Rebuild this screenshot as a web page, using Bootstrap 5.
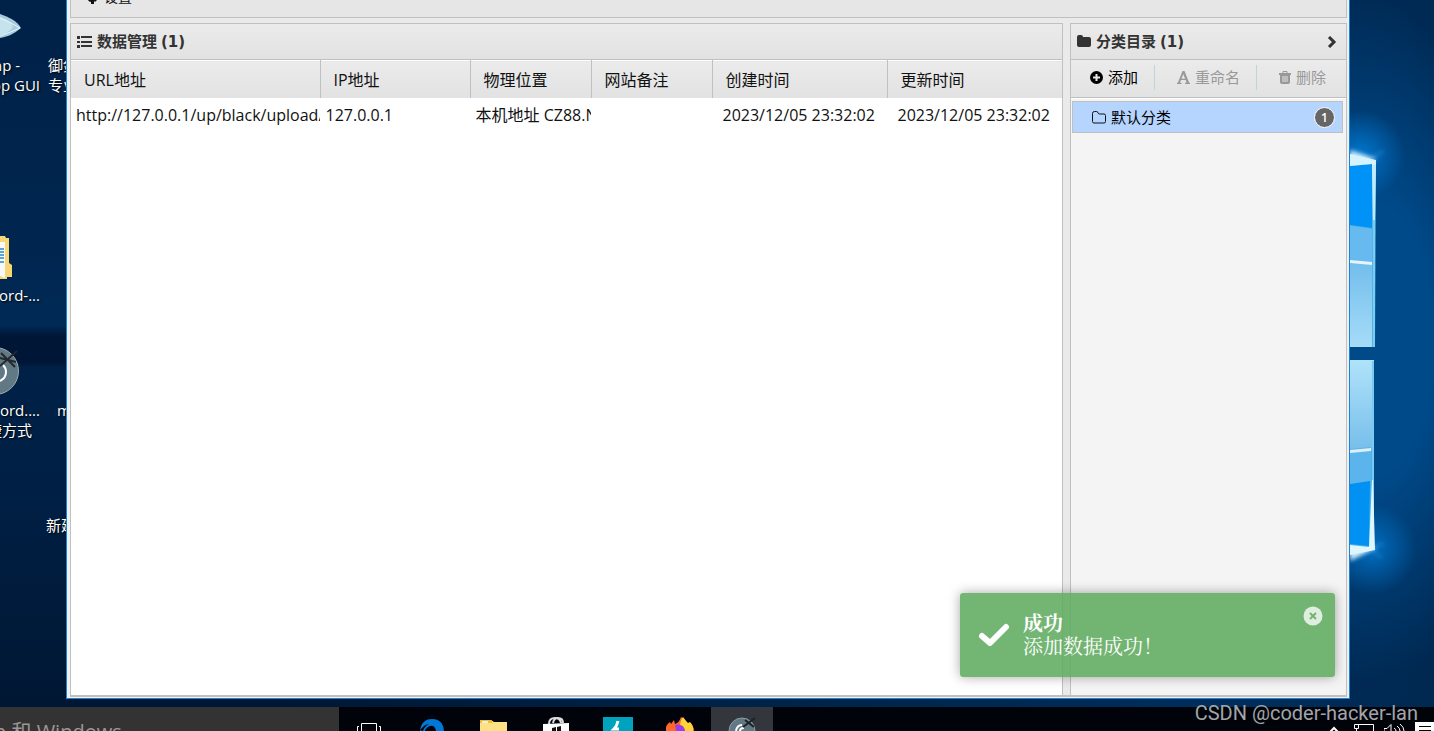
<!DOCTYPE html>
<html lang="zh-CN">
<head>
<meta charset="utf-8">
<meta name="viewport" content="width=device-width, initial-scale=1">
<title>数据管理</title>
<link rel="stylesheet" href="https://cdn.jsdelivr.net/npm/bootstrap@5.3.0/dist/css/bootstrap.min.css">
<style>
  body { font-family: "Open Sans", "Noto Sans CJK SC", sans-serif; font-size: 16px; line-height: 20px; color: #111; background: #000; }
  svg { display: block; flex: none; }
  button { font: inherit; }

  /* desktop */
  .desktop {
    min-height: 0;
    padding: 0 84px 8px 66px;
    background:
      radial-gradient(circle at 1360px 155px, rgba(0,140,240,.7), transparent 45px),
      radial-gradient(circle at 1372px 549px, rgba(0,140,240,.6), transparent 45px),
      radial-gradient(ellipse 160px 340px at 1370px 340px, #004a8a 40%, transparent),
      linear-gradient(90deg, transparent 20%, rgba(0,50,98,.85) 85%, rgba(0,42,84,.9)),
      linear-gradient(#002148, #00264f 250px, #002a56 325px, #001636 336px, #001636 362px, #002147 368px, #001f44 500px, #001733);
  }
  .logo-glow { right: 0; top: 0; }
  .shortcut { color: #fff; font-size: 15px; line-height: 20px; white-space: nowrap; text-shadow: 1px 1px 2px #000; }
  .shortcut.first-col { left: -40px; width: 80px; text-align: right; }

  /* application window */
  .app-window { z-index: 1; min-width: 0; padding: 0 2px 1px 3px; background: #f0f0f0; border: 1px solid #1883d7; border-top: 0; }
  .app-body { min-height: 0; background: #eaeaea; border-bottom: 2px solid #c0c0c0; }
  .menu-strip { height: 18px; padding: 0 16px 10px; font-size: 14px; border: 1px solid #c0c0c0; border-top: 0; background: #e6e6e6; gap: 6px; }
  .panes { min-height: 0; padding-top: 5px; }
  .pane { min-width: 0; border: 1px solid #c0c0c0; border-bottom: 0; }
  .pane-title { height: 36px; padding: 0 8px 0 6px; gap: 5px; font-size: 15px; font-weight: 700; color: #333; background: linear-gradient(#ebebeb, #e2e2e2); border-bottom: 1px solid #c0c0c0; margin: 0; }
  .count { font-family: "DejaVu Sans", sans-serif; font-size: 15px; line-height: 18px; }
  .splitter { flex: none; width: 7px; }
  .sidebar { width: 277px; background: #f4f4f4; }

  .records { table-layout: fixed; width: 100%; border-top: 1px solid #fff; }
  .records th, .records td { overflow: hidden; white-space: nowrap; height: 35px; padding: 0 0 0 5px; }
  .records th { height: 37px; padding: 2px 0 0 13px; font-weight: 400; border-right: 1px solid #c0c0c0; background: linear-gradient(#ebebeb, #e2e2e2); }
  .records th:last-child { border-right: 0; }
  .records td { border-right: 1px solid #fff; }
  .records td.stamp { padding-left: 10px; }
  .w-url { width: 249px; } .w-ip { width: 150px; } .w-short { width: 121px; } .w-time { width: 175px; }

  .tools { height: 38px; padding: 0 0 3px; border-bottom: 1px solid #c0c0c0; background: linear-gradient(#ebebeb, #e2e2e2); font-size: 15px; }
  .tools button { border: 0; background: none; padding: 0 16px 0 19px; gap: 5px; color: #000; }
  .tools button:disabled { color: #999; padding-left: 22px; }
  .tools .rule { width: 1px; height: 25px; background: #bfd6d9; }
  .tree { padding: 2px 3px 0 1px; border-top: 1px solid #fff; }
  .tree a { height: 32px; padding: 0 7px 0 19px; gap: 5px; font-size: 15px; line-height: 18px; color: #000; text-decoration: none; background: #b5d5ff; border: 1px solid #c0c0c0; }
  .pill { width: 21px; height: 21px; font-size: 12px; font-weight: 600; line-height: 19px; color: #fff; background: #666; border: 1px solid #fff; border-radius: 50%; text-align: center; }

  /* notification */
  .notice { z-index: 2; right: 99px; bottom: 30px; width: 375px; height: 84px; padding: 0 12px 2px 19px; gap: 13px; font-size: 20px; line-height: 23px; color: #fff; background: rgba(96,171,96,.88); border-radius: 3px; box-shadow: 0 0 12px rgba(0,0,0,.35); font-family: "Noto Serif CJK SC", "Noto Sans CJK SC", serif; }
  .notice button { border: 0; background: none; padding: 13px 0 0; }

  /* taskbar */
  .taskbar { height: 24px; background: #00040a; }
  .search-box { width: 339px; height: 100%; padding: 13px 0 0; color: #999; background: #333; font-size: 20px; line-height: 24px; text-indent: -6px; white-space: nowrap; }
  .task { width: 62px; height: 100%; border: 0; padding: 0; background: none; }
  .task.running { background: #33373d; }
  .tray { gap: 10px; }
  .watermark { z-index: 3; right: 16px; bottom: 6px; font: 20px/24px Roboto, sans-serif; color: #a3a5a8; }
</style>
</head>
<body class="vh-100 d-flex flex-column overflow-hidden position-relative">
<main class="desktop flex-fill d-flex position-relative overflow-hidden">
  <svg class="logo-glow position-absolute" width="84" height="707" viewBox="0 0 84 707" aria-hidden="true">
    <defs>
      <linearGradient id="pane1" x2="0" y2="1"><stop stop-color="#71bdec"/><stop offset="1" stop-color="#a6dcf8"/></linearGradient>
      <linearGradient id="pane2" x2="0" y2="1"><stop stop-color="#b0e2fa"/><stop offset="1" stop-color="#74bdea"/></linearGradient>
      <filter id="soft" x="-50%" y="-10%" width="200%" height="120%"><feGaussianBlur stdDeviation="2"/></filter>
    </defs>
    <g filter="url(#soft)"><path d="M0 150l27 9-27 8zM0 538l26 10-26 13z" fill="#cbeeff"/><path d="M20 158L34 151M20 549L34 543M22 550L32 558" stroke="#3aa9f5"/></g>
    <path d="M0 156l26 5-1 186H0z" fill="#52b5ea"/>
    <path d="M0 166l22-2v64l-22-3z" fill="#0092f6"/>
    <path d="M0 226l22 3v34l-22-3z" fill="#67baf0"/>
    <path d="M0 261l22 3v83H0z" fill="url(#pane1)"/>
    <path d="M0 260l22 2v3l-22-2z" fill="#e6f4fb"/>
    <path d="M0 154l26 6-1 60h-2l-1-56-22 2z" fill="#d6f4ff"/>
    <path d="M24 165v182" stroke="#a8e3f7" stroke-width="1"/>
    <path d="M0 360h24v190l-24 2z" fill="#4db2e8"/>
    <path d="M0 361h22v89l-22 3z" fill="url(#pane2)"/>
    <path d="M0 449l21-2v35l-21 3z" fill="#5bb5ec"/>
    <path d="M0 450l21-2v3l-21 2z" fill="#e0eff6"/>
    <path d="M0 484l20-3-1 65-19-2z" fill="#0091f2"/>
    <path d="M23 361v187" stroke="#a8e3f7" stroke-width="1"/>
    <path d="M22 480h1l2 70-25 5v-10l19 2z" fill="#dff6ff"/>
    <path d="M0 360.500h24" stroke="#aee4fa" stroke-width="1"/>
  </svg>

  <svg class="position-absolute start-0" style="top:14px" width="22" height="26" viewBox="0 0 22 26" aria-hidden="true"><path d="M0 0c9 3 17 7 21 14-7 6-14 9-21 10z" fill="#a8ccdc"/><path d="M0 3c8 3 12 6 13 10-4 5-8 7-13 8z" fill="#c5e3ef"/><path d="M0 4l7 3M0 22l8-3M7 7l13 7M8 19l12-5" stroke="#e4f6fb" fill="none"/></svg>
  <svg class="position-absolute start-0" style="top:235px" width="13" height="46" viewBox="0 0 13 46" aria-hidden="true"><path d="M0 1h5l1 2h3v25l3 2v12H7v2H0z" fill="#f7d675"/><path d="M0 7h5v36l-5-2z" fill="#f6f8fa"/><path d="M0 14h4M0 17h4M0 20h4M0 23h4M0 27h4" stroke="#5ba4d4" stroke-width="2"/></svg>
  <svg class="position-absolute start-0" style="top:346px" width="20" height="50" viewBox="0 0 20 50" aria-hidden="true"><circle cx="-5" cy="25" r="23.500" fill="#617985" stroke="#9caab0"/><path d="M0 35q6-3 6-9 0-4-3-7" fill="none" stroke="#fff" stroke-width="2"/><path d="M0 20L17 5M1 7l14 14M0 12l16 4" stroke="#22282c" stroke-width="2"/></svg>

  <div class="shortcut first-col position-absolute" style="top:55px"><span class="pe-3">np -&nbsp;</span><br>pp GUI</div>
  <div class="shortcut position-absolute" style="left:48px;top:55px">御剑<br>专业</div>
  <div class="shortcut first-col position-absolute" style="top:285px">word-...</div>
  <div class="shortcut first-col position-absolute" style="top:400px">word....<br><span class="pe-2">捷方式</span></div>
  <div class="shortcut position-absolute" style="left:57px;top:400px">my</div>
  <div class="shortcut position-absolute" style="left:46px;top:515px">新建</div>

  <section class="app-window flex-fill d-flex flex-column position-relative">
    <div class="app-body flex-fill d-flex flex-column">
      <div class="menu-strip d-flex align-items-end overflow-hidden">
        <svg width="11" height="18" viewBox="0 0 11 18" aria-hidden="true"><circle cx="5" cy="9" r="4" fill="#111"/><path d="M4 11h3v4H4zM0 10l3 3 1-3zM11 10l-3 3-1-3z" fill="#111"/></svg>
        <span>设置</span>
      </div>
      <div class="panes flex-fill d-flex">
        <section class="pane flex-fill bg-white">
          <h1 class="pane-title d-flex align-items-center">
            <svg width="15" height="12" viewBox="0 0 15 12" fill="#333" aria-hidden="true"><path d="M0 0h3v3H0zM0 5h3v2H0zM0 9h3v3H0zM4 0h11v2H4zM4 5h11v2H4zM4 9h11v2H4z"/></svg>
            <span>数据管理 <span class="count">(1)</span></span>
          </h1>
          <table class="records">
            <colgroup><col class="w-url"><col class="w-ip"><col class="w-short"><col class="w-short"><col class="w-time"><col></colgroup>
            <thead><tr><th scope="col">URL地址</th><th scope="col">IP地址</th><th scope="col">物理位置</th><th scope="col">网站备注</th><th scope="col">创建时间</th><th scope="col">更新时间</th></tr></thead>
            <tbody><tr><td>http://127.0.0.1/up/black/upload/m</td><td>127.0.0.1</td><td>本机地址 CZ88.NET</td><td></td><td class="stamp">2023/12/05 23:32:02</td><td class="stamp">2023/12/05 23:32:02</td></tr></tbody>
          </table>
        </section>
        <div class="splitter"></div>
        <aside class="pane sidebar flex-shrink-0">
          <h2 class="pane-title d-flex align-items-center">
            <svg width="14" height="13" viewBox="0 0 14 13" fill="#333" aria-hidden="true"><path d="M0 2q0-2 2-2h2q2 0 2 2h6q2 0 2 2v6q0 2-2 2H2q-2 0-2-2z"/></svg>
            <span class="me-auto">分类目录 <span class="count">(1)</span></span>
            <svg width="11" height="12" viewBox="0 0 11 12" fill="none" stroke="#333" stroke-width="3" aria-hidden="true"><path d="M2 1l5 5-5 5"/></svg>
          </h2>
          <div class="tools d-flex align-items-center">
            <button type="button" class="d-flex align-items-center"><svg width="13" height="13" viewBox="0 0 13 13" aria-hidden="true"><circle cx="6.500" cy="6.500" r="6.500"/><path d="M6.500 3v7M3 6.500h7" stroke="#e8e8e8" stroke-width="2"/></svg>添加</button>
            <span class="rule"></span>
            <button type="button" class="d-flex align-items-center" disabled><svg width="13" height="13" viewBox="0 0 13 13" fill="#999" fill-rule="evenodd" aria-hidden="true"><path d="M5.500 0h2L12 11.500l1 .5v1H8v-1l1.500-.5L8.700 9H4l-1 2.500 1.500.5v1H0v-1l1-.5zM6.200 3L4.600 7.700h3.500z"/></svg>重命名</button>
            <span class="rule"></span>
            <button type="button" class="d-flex align-items-center pe-0" disabled><svg width="12" height="13" viewBox="0 0 12 13" aria-hidden="true"><path d="M0 2h12v2H0zM1 4h10v7q0 2-2 2H3q-2 0-2-2z" fill="#999"/><path d="M4 2V.5h4V2" fill="none" stroke="#999"/><path d="M4 5v6M6 5v6M8 5v6" stroke="#e3e3e3"/></svg>删除</button>
          </div>
          <nav class="tree">
            <a href="#" class="d-flex align-items-center">
              <svg width="14" height="13" viewBox="0 0 14 13" fill="none" stroke="#111" aria-hidden="true"><path d="M.5 2.500q0-2 2-2h2q1.500 0 1.500 1.500.5 1 1.500 1h4.500q1.500 0 1.500 1.500v6q0 1.500-1.500 1.500h-10q-1.500 0-1.500-1.500z"/></svg>
              <span class="me-auto">默认分类</span><span class="pill">1</span>
            </a>
          </nav>
        </aside>
      </div>
    </div>
  </section>

  <div class="notice position-absolute d-flex" role="status">
    <svg class="align-self-center" width="31" height="23" viewBox="0 0 31 23" fill="none" stroke="#fff" stroke-width="6" stroke-linecap="round" stroke-linejoin="round" aria-hidden="true"><path d="M3 13l8 7L27 4"/></svg>
    <div class="align-self-center me-auto"><b>成功</b><br>添加数据成功！</div>
    <button type="button" class="align-self-start" aria-label="关闭"><svg width="20" height="20" viewBox="0 0 20 20" aria-hidden="true"><circle cx="10" cy="10" r="9.500" fill="#e0eee0"/><path d="M7 7l6 6M13 7l-6 6" stroke="#72b572" stroke-width="2"/></svg></button>
  </div>
</main>

<footer class="taskbar d-flex overflow-hidden flex-shrink-0">
  <div class="search-box overflow-hidden">b 和 Windows</div>
  <button class="task" type="button" aria-label="任务视图"><svg width="62" height="24" viewBox="0 0 62 24" fill="none" stroke="#fff"><path d="M22.500 24v-7.500h15V24M20 19.500h-1.500V24M40 19.500h1.500V24"/></svg></button>
  <button class="task" type="button" aria-label="Edge"><svg width="62" height="24" viewBox="0 0 62 24"><path d="M19 24C20 15 25 12 31 12q11 0 12 12h-8q-1-6-6-5-4 1-5 5z" fill="#0078d7"/><path d="M19 23q5-6 9-6-5 3-6 7z" fill="#00040a"/></svg></button>
  <button class="task" type="button" aria-label="文件夹"><svg width="62" height="24" viewBox="0 0 62 24"><path d="M17 13h11l3 2h13v9H17z" fill="#ffe084"/><path d="M17 13h11l2 3H17z" fill="#f3bd2f"/><path d="M19 14h6v2h-6z" fill="#dff2f6"/></svg></button>
  <button class="task" type="button" aria-label="商店"><svg width="62" height="24" viewBox="0 0 62 24"><path d="M18 17l26-1v8H18z" fill="#fff"/><path d="M24 17q0-6 6-6 5 0 6 5M28 16q1-5 5-5 5 0 5 5" fill="none" stroke="#ddd" stroke-width="2"/><path d="M27 21l4-1v4h-4zM32 20l4-1v5h-4z" fill="#111"/></svg></button>
  <button class="task" type="button" aria-label="终端"><svg width="62" height="24" viewBox="0 0 62 24"><path d="M16 10h30v14H16z" fill="#00a3bd"/><path d="M31 14q-1 5-4 8h5" fill="none" stroke="#fff" stroke-width="3"/></svg></button>
  <button class="task" type="button" aria-label="Firefox"><svg width="62" height="24" viewBox="0 0 62 24"><path d="M17 24q-1-6 4-9l1 2 3-4 1 4q4-1 6-7 4 2 6 7l3-1q4 3 4 8z" fill="#ff672b"/><path d="M31 18q1-6 3-8 3 4 5 6l2-1q4 4 3 9h-8q0-5-5-6z" fill="#ffd43a"/><path d="M26 18q8-2 10 6h-9z" fill="#9b3ee8"/></svg></button>
  <button class="task running" type="button" aria-label="当前应用"><svg width="62" height="24" viewBox="0 0 62 24"><circle cx="31" cy="24" r="13" fill="#617985" stroke="#8b9ba4"/><path d="M25 24q1-6 6-6M29 24q0-3 4-3" fill="none" stroke="#fff" stroke-width="2"/><path d="M32 20L44 11M34 13l9 7" stroke="#1c2226" stroke-width="2"/></svg></button>
  <div class="tray d-flex ms-auto">
    <svg width="15" height="24" viewBox="0 0 15 24" fill="none" stroke="#fff" stroke-width="2"><path d="M1 25l4-4 4 4"/></svg>
    <svg width="20" height="24" viewBox="0 0 20 24" fill="none" stroke="#fff"><path d="M4 17.500h15.500V24M.5 17.500h4v4h-4zM2.500 21v3"/></svg>
    <svg width="21" height="24" viewBox="0 0 21 24" fill="none" stroke="#fff"><path d="M0 24v-2.500h3l4-4V24M10 21q2 1 2 3M13 19q3 2 3 5M16 17q4 3 4 7"/></svg>
    <svg width="19" height="24" viewBox="0 0 19 24"><path d="M0 15h19v9H0z" fill="#fff"/><path d="M4 19.500h12M4 23.500h12" stroke="#000"/></svg>
  </div>
</footer>
<div class="watermark position-absolute">CSDN @coder-hacker-lan</div>
<script src="https://cdn.jsdelivr.net/npm/bootstrap@5.3.0/dist/js/bootstrap.bundle.min.js"></script>
</body>
</html>
